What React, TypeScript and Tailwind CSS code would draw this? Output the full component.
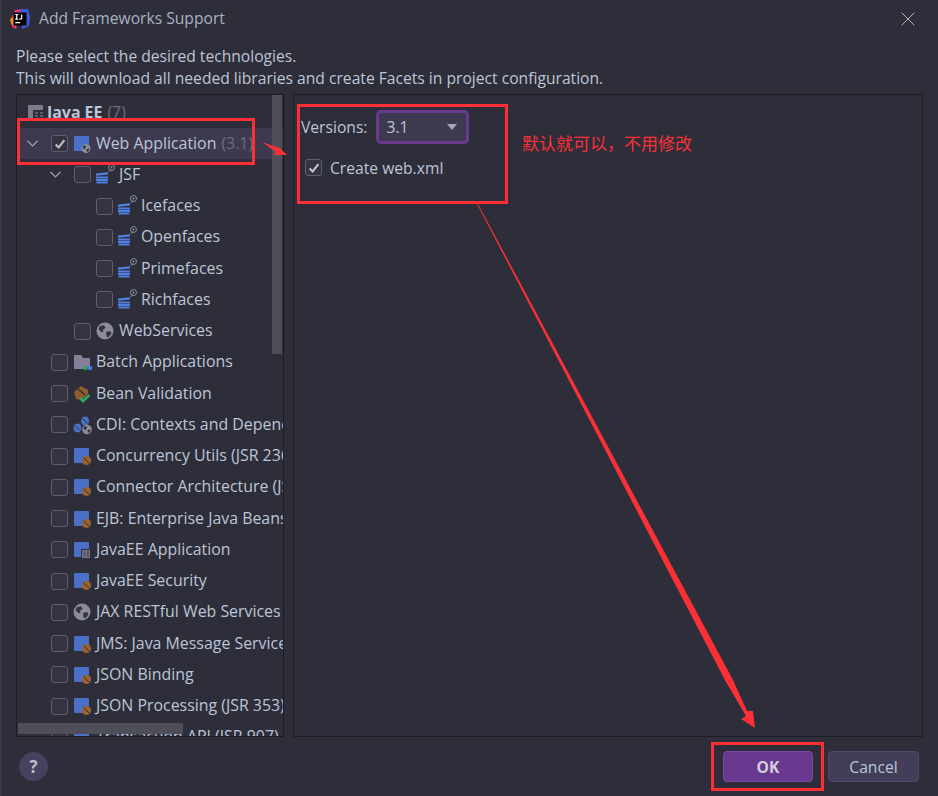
import { ChevronDown, X } from "lucide-react";

type IconKind = "web" | "bean" | "ee" | "jsf" | "globe" | "batch" | "validation" | "cdi" | "group";

interface TreeRow {
  label: string;
  level: 0 | 1 | 2;
  icon: IconKind;
  open?: boolean;
  checked?: boolean;
  selected?: boolean;
  version?: string;
}

const rows: TreeRow[] = [
  { label: "Web Application", level: 0, icon: "web", open: true, checked: true, selected: true, version: "(3.1)" },
  { label: "JSF", level: 1, icon: "jsf", open: true },
  { label: "Icefaces", level: 2, icon: "jsf" },
  { label: "Openfaces", level: 2, icon: "jsf" },
  { label: "Primefaces", level: 2, icon: "jsf" },
  { label: "Richfaces", level: 2, icon: "jsf" },
  { label: "WebServices", level: 1, icon: "globe" },
  { label: "Batch Applications", level: 0, icon: "batch" },
  { label: "Bean Validation", level: 0, icon: "validation" },
  { label: "CDI: Contexts and Dependency Injection", level: 0, icon: "cdi" },
  { label: "Concurrency Utils (JSR 236)", level: 0, icon: "bean" },
  { label: "Connector Architecture (JSR 322)", level: 0, icon: "bean" },
  { label: "EJB: Enterprise Java Beans", level: 0, icon: "bean" },
  { label: "JavaEE Application", level: 0, icon: "ee" },
  { label: "JavaEE Security", level: 0, icon: "bean" },
  { label: "JAX RESTful Web Services", level: 0, icon: "globe" },
  { label: "JMS: Java Message Service", level: 0, icon: "bean" },
  { label: "JSON Binding", level: 0, icon: "bean" },
  { label: "JSON Processing (JSR 353)", level: 0, icon: "bean" },
  { label: "Transaction API (JSR 907)", level: 0, icon: "bean" },
];

const indents = ["w-[34px]", "w-[57px]", "w-[79px]"];

function Globe({ cx, cy, r }: { cx: number; cy: number; r: number }) {
  const s = r / 8;
  return (
    <g transform={`translate(${cx - r} ${cy - r}) scale(${s})`}>
      <circle cx="8" cy="8" r="8" fill="#8b8b99" />
      <path d="M3 3.5 L7 2.5 L8.5 5 L6 7 L6.5 9.5 L4 8.5 L2 6 Z M9 9 L13 8 L14 10.5 L11 14 L9.5 13 Z" fill="#34343f" />
    </g>
  );
}

function Bean({ cx, cy }: { cx: number; cy: number }) {
  return (
    <g>
      <circle cx={cx} cy={cy} r="4.6" fill="#9a6230" />
      <path d={`M${cx - 3} ${cy - 3} L${cx + 3} ${cy + 3}`} stroke="#2e2e3a" strokeWidth="1" />
    </g>
  );
}

function TreeIcon({ kind }: { kind: IconKind }) {
  return (
    <svg viewBox="0 0 19 18" className="w-[19px] h-[18px] shrink-0 overflow-visible">
      {(kind === "web" || kind === "bean" || kind === "ee") && (
        <rect x="1" y="1" width="15" height="15" rx="1" fill="#4a71c7" />
      )}
      {kind === "web" && <Globe cx={13} cy={13.5} r={4.5} />}
      {kind === "bean" && <Bean cx={13.5} cy={13.5} />}
      {kind === "ee" && (
        <g>
          <rect x="8" y="8" width="9" height="9" fill="#2e2e3a" />
          <rect x="9" y="9" width="8" height="8" fill="#777785" />
          <path d="M10.5 11h2M10.5 13h2M10.5 15h2M14 11h2M14 13h2M14 15h2" stroke="#2e2e3a" strokeWidth="1" />
        </g>
      )}
      {kind === "jsf" && (
        <g>
          <path d="M0 7.5l12-1.2v2.2L0 9.7zM0 10.4h12v2H0zM0 13h12v2H0zM0.5 15.6h11v2h-11z" fill="#4f7fe0" />
          <path d="M12.5 6 L15 3.5" stroke="#8f8f9d" strokeWidth="1" fill="none" />
          <circle cx="15.5" cy="1.5" r="3" stroke="#8f8f9d" strokeWidth="1" fill="none" />
          <circle cx="15.5" cy="1.5" r="1" fill="#8f8f9d" />
        </g>
      )}
      {kind === "globe" && <Globe cx={9} cy={9} r={8.5} />}
      {kind === "batch" && (
        <g>
          <path d="M1 2h7l2 3h7v11H1z" fill="#85809a" />
          <circle cx="12.5" cy="15" r="2.2" fill="#1fa463" />
          <circle cx="17" cy="15" r="2.2" fill="#4f7fe0" />
        </g>
      )}
      {kind === "validation" && (
        <g>
          <path d="M1 7 L8 1 L15 5 L15 9 L9 15 L3 14 Z" fill="#8f5c2c" />
          <path d="M5 4l7 6" stroke="#2e2e3a" strokeWidth="1.2" />
          <path d="M7 13l3 3.2 6.5-6" stroke="#23b368" strokeWidth="2.4" fill="none" />
        </g>
      )}
      {kind === "cdi" && (
        <g>
          <ellipse cx="4.5" cy="12" rx="4" ry="4.6" fill="#4a71c7" />
          <ellipse cx="12" cy="5" rx="4" ry="4.6" fill="#4a71c7" />
          <path d="M2 9.5l5 5M9.5 2.5l5 5" stroke="#2e2e3a" strokeWidth="1" />
          <Globe cx={14} cy={13.5} r={4.8} />
        </g>
      )}
      {kind === "group" && (
        <g>
          <rect x="1" y="1" width="15" height="15" fill="#7b7b89" />
          <rect x="6" y="6" width="11" height="11" fill="#2e2e3a" />
          <path d="M8 9h3M8 12h3M8 15h3M13 9h3M13 12h3M13 15h3" stroke="#8b8b99" strokeWidth="1.2" />
        </g>
      )}
    </svg>
  );
}

function Checkbox({ checked }: { checked?: boolean }) {
  return (
    <span className="w-[17px] h-[17px] shrink-0 rounded-[3px] border border-[#5f5c75] bg-[#34333f] flex items-center justify-center">
      {checked && (
        <svg viewBox="0 0 16 16" className="w-[14px] h-[14px]">
          <path d="M3 8.5l3.5 3.5L13 3.5" stroke="#c2c2cc" strokeWidth="2.4" fill="none" />
        </svg>
      )}
    </span>
  );
}

function Row({ row }: { row: TreeRow }) {
  return (
    <div className={`h-[31.25px] shrink-0 flex items-center ${row.selected ? "bg-[#3d3a50]" : ""}`}>
      <div className={`${indents[row.level]} shrink-0 flex justify-end pr-[9px]`}>
        {row.open && <ChevronDown className="w-[19px] h-[19px] text-[#a9a9b5]" strokeWidth={1.5} />}
      </div>
      <Checkbox checked={row.checked} />
      <div className="ml-[5px] mr-[4px]">
        <TreeIcon kind={row.icon} />
      </div>
      <span className="whitespace-nowrap">
        {row.label}
        {row.version && <span className="ml-[5px] text-[#6e6c80]">{row.version}</span>}
      </span>
    </div>
  );
}

function IdeaLogo() {
  return (
    <svg viewBox="0 0 20 20" className="w-[20px] h-[20px]">
      <path d="M1 10 L5 1 L12 0 L6 20 L2 18 Z" fill="#e8336e" />
      <path d="M0 10 L4 8 L4 17 L1 15 Z" fill="#f38a1d" />
      <path d="M10 0 H18 L20 8 L19 17 L12 20 Z" fill="#3b5bdb" />
      <path d="M4 3 H10 L6 6 Z" fill="#a83ad8" />
      <rect x="3.5" y="3.5" width="13" height="13" fill="#000000" />
      <path d="M5.2 5.5h3M6.7 5.5v4.6M5.2 10.1h3M11.7 5.5v3.8c0 .9-1.6 1.2-2.4.4M5.2 13.7h5" stroke="#ffffff" strokeWidth="1.2" fill="none" />
    </svg>
  );
}

export default function App() {
  return (
    <div className="relative w-[938px] h-[796px] overflow-hidden flex flex-col bg-[#2e2e3a] text-[#bcc5d6] text-[15.65px] font-['Open_Sans','Noto_Sans','Noto_Sans_CJK_SC',sans-serif] border-l border-[#3b3b47]">
      <div className="h-[37px] shrink-0 flex items-center pl-[9px] pr-[18px]">
        <IdeaLogo />
        <span className="ml-[9px] text-[#a9b1c0]">Add Frameworks Support</span>
        <X className="ml-auto w-[24px] h-[24px] text-[#b5b5c0]" strokeWidth={1} />
      </div>

      <div className="pl-[15px] pt-[8px] leading-[22px] h-[57px] shrink-0">
        <p>Please select the desired technologies.</p>
        <p>This will download all needed libraries and create Facets in project configuration.</p>
      </div>

      <div className="h-[643px] shrink-0 flex pl-[15px] pr-[15px] gap-[9px]">
        <div className="relative w-[268px] shrink-0 border border-[#1c1c24] overflow-hidden text-[15.9px]">
          <div className="h-[33px] shrink-0 flex items-center pl-[10px] pt-[3px]">
            <TreeIcon kind="group" />
            <span className="ml-[1px] font-bold whitespace-nowrap">Java EE</span>
            <span className="ml-[5px] text-[#6e6c80]">(7)</span>
          </div>
          <div className="flex flex-col">
            {rows.map((row) => (
              <Row key={row.label} row={row} />
            ))}
          </div>
          <div className="absolute top-0 right-[1px] w-[10px] h-[259px] bg-[#4e4e59]" />
          <div className="absolute bottom-[2px] left-[1px] w-[165px] h-[11px] bg-[#4e4e59]" />
        </div>

        <div className="flex-1 border border-[#1c1c24] pl-[7px] pt-[14px]">
          <div className="flex items-center h-[36px]">
            <span className="mt-[2px]">Versions:</span>
            <div className="ml-[9px] w-[93px] h-[34px] rounded-[5px] border-[3px] border-[#69398f] bg-[#3d3a50] flex items-center justify-between pl-[7px] pr-[9px]">
              <span className="mt-[2px]">3.1</span>
              <span className="w-0 h-0 border-l-[5.5px] border-r-[5.5px] border-t-[6px] border-l-transparent border-r-transparent border-t-[#a9a9b5]" />
            </div>
          </div>
          <div className="flex items-center mt-[7px] pl-[4px] h-[31px]">
            <Checkbox checked />
            <span className="ml-[8px] mt-[2px]">Create web.xml</span>
          </div>
        </div>
      </div>

      <div className="flex-1 flex items-center pl-[18px] pr-[19px]">
        <div className="w-[29px] h-[29px] rounded-full bg-[#45415f] flex items-center justify-center text-[#bdbdc9] font-bold text-[17px]">?</div>
        <button className="ml-auto w-[90px] h-[31px] pt-[2px] rounded-[4px] bg-[#69398f] border border-[#7a4ba0] text-[#cfcfe0] font-bold">OK</button>
        <button className="ml-[15px] w-[91px] h-[31px] pt-[2px] rounded-[4px] bg-[#423d58] border border-[#4d4966] text-[#bcc5d6]">Cancel</button>
      </div>

      {/* red annotations on top of the dialog */}
      <svg className="absolute left-[-1px] top-0 w-[938px] h-[796px] pointer-events-none" viewBox="0 0 938 796">
        <rect x="18.5" y="119.5" width="235" height="44" fill="none" stroke="#fb3036" strokeWidth="3" />
        <rect x="298.5" y="105.5" width="208" height="97" fill="none" stroke="#fb3036" strokeWidth="3" />
        <rect x="712.5" y="743.5" width="110" height="46" fill="none" stroke="#fb3036" strokeWidth="3" />
        <polygon points="262,142 279,148 278,146 287,155 273,155 276,152" fill="#fb3036" />
        <polygon points="477,204 478,204 733,680 747,711 753,711 755,728 741,719 746,716 726,682" fill="#fb3036" />
      </svg>
      <span className="absolute left-[521px] top-[131px] text-[17px] text-[#fb3036] font-['Noto_Sans_CJK_SC',sans-serif] leading-[24px] whitespace-nowrap">默认就可以，不用修改</span>
    </div>
  );
}
